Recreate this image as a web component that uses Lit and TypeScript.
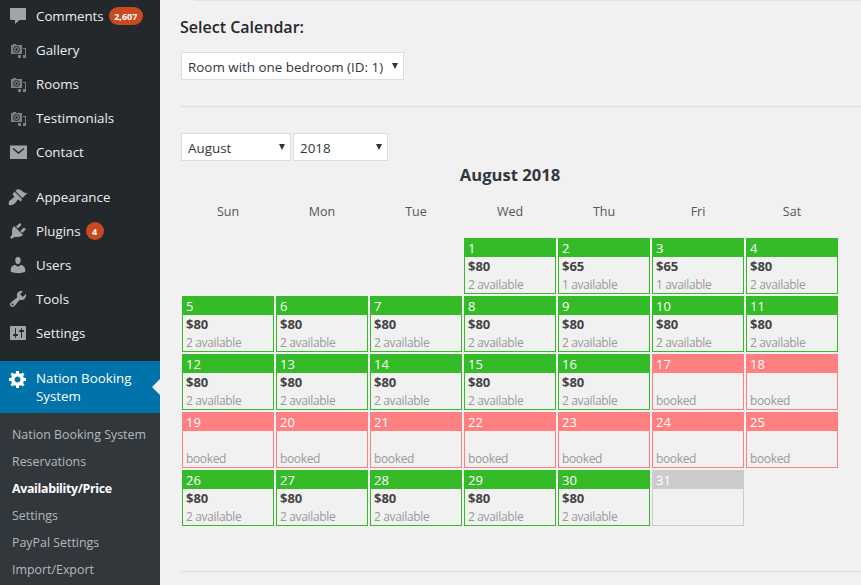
import { LitElement, html, css, svg } from "lit";
import { customElement } from "lit/decorators.js";

const FONT = `"Open Sans","Noto Sans",sans-serif`;

const ICONS: Record<string, unknown> = {
  comments: svg`<path d="M3 2h14c.5 0 1 .4 1 1v10c0 .6-.5 1-1 1h-5.5L7 18v-4H3c-.5 0-1-.4-1-1V3c0-.6.5-1 1-1z"/>`,
  gallery: svg`<g fill="#7d8083"><path d="M3 5h2V4h3v1h6v9H3z"/><rect x="15" y="8" width="3" height="1"/><rect x="17" y="8" width="1" height="8"/><rect x="10" y="15" width="3" height="3"/><rect x="15" y="15" width="3" height="3"/></g><circle cx="8.5" cy="9.5" r="3" fill="none" stroke="#23282d"/><circle cx="8.5" cy="9.5" r="1.2" fill="#23282d"/>`,
  contact: svg`<rect x="2" y="3.5" width="17" height="13.5"/><path d="M5 6.5l5.5 4.5 5.5-4.5" fill="none" stroke="#23282d" stroke-width="1.5"/>`,
  appearance: svg`<path d="M14.48 11.06L7.41 3.99l1.5-1.5c.5-.56 2.3-.47 3.51.32 1.21.8 1.43 1.28 2.91 2.1 1.18.64 2.45 1.26 4.45.85zm-.71.71L6.7 4.7 4.93 6.47c-.39.39-.39 1.02 0 1.41l1.06 1.06c.39.39.39 1.03 0 1.42-.6.6-1.43 1.11-2.21 1.69-.35.26-.7.53-1.01.84C1.43 12.81 0 16.2 1.1 17.9c1.4 1.1 4.6-.5 5.9-1.7.31-.31.58-.66.84-1.01.58-.78 1.09-1.61 1.69-2.21.39-.39 1.03-.39 1.42 0l1.06 1.06c.39.39 1.02.39 1.41 0z"/>`,
  plugins: svg`<path d="M13.11 4.36L9.87 7.6 8 5.73l3.24-3.24c.35-.34 1.05-.2 1.56.32.52.51.66 1.21.31 1.55zm-8 1.77l.91-1.12 9.01 9.01-1.19.84c-.71.71-2.63 1.16-3.82 1.16H6.14L4.9 17.26c-.59.59-1.54.59-2.12 0-.59-.58-.59-1.53 0-2.12l1.24-1.24v-3.88c0-1.13.4-3.19 1.09-3.89zm7.26 3.97l3.24-3.24c.34-.35 1.04-.21 1.55.31.52.51.66 1.21.31 1.55l-3.24 3.25z"/>`,
  users: svg`<path d="M10 9.25c-2.27 0-2.73-3.44-2.73-3.44C7 4.02 7.82 2 9.97 2c2.16 0 2.98 2.02 2.71 3.81 0 0-.41 3.44-2.68 3.44zm0 2.57L12.72 10c2.39 0 4.52 2.33 4.52 4.53v2.49s-3.65 1.13-7.24 1.13c-3.65 0-7.24-1.13-7.24-1.13v-2.49c0-2.25 1.94-4.48 4.47-4.48z"/>`,
  tools: svg`<path d="M16.68 9.77c-1.34 1.34-3.3 1.67-4.95.99l-5.41 6.52c-.99.99-2.59.99-3.58 0s-.99-2.59 0-3.57l6.52-5.42c-.68-1.65-.35-3.61.99-4.95 1.28-1.28 3.12-1.62 4.72-1.06l-2.89 2.89 2.82 2.82 2.86-2.87c.53 1.58.18 3.39-1.08 4.65zM3.81 16.21c.4.39 1.04.39 1.43 0 .4-.4.4-1.04 0-1.43-.39-.4-1.03-.4-1.43 0-.39.39-.39 1.03 0 1.43z"/>`,
  settings: svg`<path d="M18 16V4c0-.55-.45-1-1-1H3c-.55 0-1 .45-1 1v12c0 .55.45 1 1 1h14c.55 0 1-.45 1-1zM8 11h1c.55 0 1 .45 1 1s-.45 1-1 1H8v1.5c0 .28-.22.5-.5.5s-.5-.22-.5-.5V13H6c-.55 0-1-.45-1-1s.45-1 1-1h1V5.5c0-.28.22-.5.5-.5s.5.22.5.5V11zm5-2h-1c-.55 0-1-.45-1-1s.45-1 1-1h1V5.5c0-.28.22-.5.5-.5s.5.22.5.5V7h1c.55 0 1 .45 1 1s-.45 1-1 1h-1v5.5c0 .28-.22.5-.5.5s-.5-.22-.5-.5V9z"/>`,
  generic: svg`<path d="M18 12h-2.18c-.17.7-.44 1.35-.81 1.93l1.54 1.54-2.1 2.1-1.54-1.54c-.58.36-1.23.63-1.91.79V19H8v-2.18c-.68-.16-1.33-.43-1.91-.79l-1.54 1.54-2.12-2.12 1.54-1.54c-.36-.58-.63-1.23-.79-1.91H1V9.03h2.17c.16-.7.44-1.35.8-1.94L2.43 5.55l2.1-2.1 1.54 1.54c.58-.37 1.24-.64 1.93-.81V2h3v2.18c.68.16 1.33.43 1.91.79l1.54-1.54 2.12 2.12-1.54 1.54c.36.59.64 1.24.8 1.94H18V12zm-8.5 1.5c1.66 0 3-1.34 3-3s-1.34-3-3-3-3 1.34-3 3 1.34 3 3 3z"/>`,
};

type Item = { label: string; icon: string; badge?: string };
const GROUP_A: Item[] = [
  { label: "Comments", icon: "comments", badge: "2,607" },
  { label: "Gallery", icon: "gallery" },
  { label: "Rooms", icon: "gallery" },
  { label: "Testimonials", icon: "gallery" },
  { label: "Contact", icon: "contact" },
];
const GROUP_B: Item[] = [
  { label: "Appearance", icon: "appearance" },
  { label: "Plugins", icon: "plugins", badge: "4" },
  { label: "Users", icon: "users" },
  { label: "Tools", icon: "tools" },
  { label: "Settings", icon: "settings" },
];
const SUB = ["Nation Booking System", "Reservations", "Availability/Price", "Settings", "PayPal Settings", "Import/Export"];
const DAYS = ["Sun", "Mon", "Tue", "Wed", "Thu", "Fri", "Sat"];

type Day = { n: number; kind: "free" | "booked" | "past"; price?: string; note?: string };
const CAL: Day[] = Array.from({ length: 31 }, (_, i) => {
  const n = i + 1;
  if (n === 31) return { n, kind: "past" };
  if (n >= 17 && n <= 25) return { n, kind: "booked", note: "booked" };
  if (n === 2 || n === 3) return { n, kind: "free", price: "$65", note: "1 available" };
  return { n, kind: "free", price: "$80", note: "2 available" };
});

@customElement("app-root")
export class AppRoot extends LitElement {
  static styles = css`
    :host { display: flex; width: 861px; height: 585px; overflow: hidden; background: #f1f1f1; font-family: ${css([FONT] as unknown as TemplateStringsArray)}; color: #32373c; }
    * { box-sizing: border-box; }
    .side { width: 160px; flex: none; background: #23282d; display: flex; flex-direction: column; height: 585px; overflow: hidden; }
    .group { display: flex; flex-direction: column; margin-bottom: 11px; }
    .group.first { margin-top: -1px; }
    .item { height: 34px; display: flex; align-items: center; color: #eee; font-size: 13.3px; }
    .item svg { width: 20px; height: 20px; margin-left: 8px; margin-right: 8px; flex: none; fill: #a0a5aa; }
    .badge { margin-left: 5px; background: #ca4a1f; color: #fff; font-size: 9px; font-weight: 700; height: 18px; min-width: 18px; padding: 0 5.5px; border-radius: 9px; display: flex; align-items: center; justify-content: center; }
    .active { position: relative; height: 52px; background: #0073aa; color: #fff; display: flex; align-items: center; font-size: 13.3px; line-height: 18px; }
    .active svg { align-self: flex-start; margin: 8px 8px 0 8px; width: 20px; height: 20px; fill: #fff; flex: none; }
    .active .arrow { position: absolute; right: 0; top: 18px; width: 0; height: 0; border: 8px solid transparent; border-right-color: #f1f1f1; border-left-width: 0; }
    .sub { background: #32373c; flex: 1; padding-top: 8px; display: flex; flex-direction: column; }
    .sub div { height: 27px; padding-left: 12px; display: flex; align-items: center; font-size: 12.4px; color: #b4b9be; white-space: nowrap; }
    .sub div.cur { color: #fff; font-weight: 700; letter-spacing: -0.33px; }
    .main { flex: 1; min-width: 0; padding-left: 20px; display: flex; flex-direction: column; }
    .topline { height: 1px; margin-left: 14px; background: #e3e3e3; flex: none; }
    h2 { margin: 15px 0 0 0; font-size: 16px; line-height: 22px; font-weight: 600; color: #23282d; }
    .sel { position: relative; display: block; height: 28px; flex: none; }
    .sel select { appearance: none; -webkit-appearance: none; width: 100%; height: 28px; border: 1px solid #ddd; background: #fff; border-radius: 0; padding: 2px 6px 0; margin: 0; font: inherit; font-size: 13.4px; color: #32373c; outline: none; }
    .sel::after { content: ""; position: absolute; right: 6px; top: 11px; border-style: solid; border-width: 6px 3px 0 3px; border-color: #333 transparent transparent transparent; pointer-events: none; }
    .s-cal { width: 223px; margin: 14px 0 0 1px; }
    hr { border: 0; height: 1px; background: #e0e0e0; margin: 26px 0 26px 0; flex: none; width: 100%; }
    .pick { display: flex; gap: 2px; margin-left: 1px; }
    .s-month { width: 110px; }
    .s-year { width: 95px; }
    .cal { margin-left: 2px; width: 656px; }
    .title { text-align: center; font-size: 16.6px; font-weight: 700; line-height: 22px; margin-top: 3px; color: #32373c; }
    .head { display: grid; grid-template-columns: repeat(7, 92px); column-gap: 2px; margin-top: 16px; margin-bottom: 16px; }
    .head div { text-align: center; font-size: 12.5px; line-height: 20px; color: #555; }
    .grid { display: grid; grid-template-columns: repeat(7, 92px); grid-auto-rows: 56px; gap: 2px; }
    .cell { border: 1px solid; display: flex; flex-direction: column; overflow: hidden; }
    .num { height: 19px; flex: none; margin: -1px -1px 0; color: #fff; font-size: 13px; line-height: 20px; padding-left: 4px; }
    .price { font-weight: 700; font-size: 13px; line-height: 18px; padding-left: 3px; height: 18px; flex: none; color: #444; }
    .note { font-size: 12px; letter-spacing: -0.35px; line-height: 16px; height: 16px; padding-left: 3px; color: #999; white-space: nowrap; margin-top: 2px; flex: none; }
    .spacer { height: 18px; flex: none; }
    .free { border-color: #35ba28; } .free .num { background: #35ba28; }
    .booked { border-color: #ff8080; } .booked .num { background: #ff8080; }
    .past { border-color: #ccc; } .past .num { background: #ccc; }
    .end { margin-top: 45px; }
  `;

  private row(i: Item) {
    return html`<div class="item">
      <svg viewBox="0 0 20 20">${ICONS[i.icon]}</svg><span>${i.label}</span>
      ${i.badge ? html`<span class="badge">${i.badge}</span>` : null}
    </div>`;
  }

  private cell(d: Day) {
    return html`<div class="cell ${d.kind}" style=${d.n === 1 ? "grid-column-start:4" : ""}>
      <div class="num">${d.n}</div>
      ${d.price ? html`<div class="price">${d.price}</div>` : html`<div class="spacer"></div>`}
      ${d.note ? html`<div class="note">${d.note}</div>` : null}
    </div>`;
  }

  render() {
    return html`
      <nav class="side">
        <div class="group first">${GROUP_A.map((i) => this.row(i))}</div>
        <div class="group">${GROUP_B.map((i) => this.row(i))}</div>
        <div class="active">
          <svg viewBox="0 0 20 20">${ICONS.generic}</svg><span>Nation Booking<br />System</span><i class="arrow"></i>
        </div>
        <div class="sub">${SUB.map((s, i) => html`<div class=${i === 2 ? "cur" : ""}>${s}</div>`)}</div>
      </nav>
      <main class="main">
        <div class="topline"></div>
        <h2>Select Calendar:</h2>
        <label class="sel s-cal"><select><option>Room with one bedroom (ID: 1)</option></select></label>
        <hr />
        <div class="pick">
          <label class="sel s-month"><select><option>August</option></select></label>
          <label class="sel s-year"><select><option>2018</option></select></label>
        </div>
        <section class="cal">
          <div class="title">August 2018</div>
          <div class="head">${DAYS.map((d) => html`<div>${d}</div>`)}</div>
          <div class="grid">${CAL.map((d) => this.cell(d))}</div>
        </section>
        <hr class="end" />
      </main>
    `;
  }
}
